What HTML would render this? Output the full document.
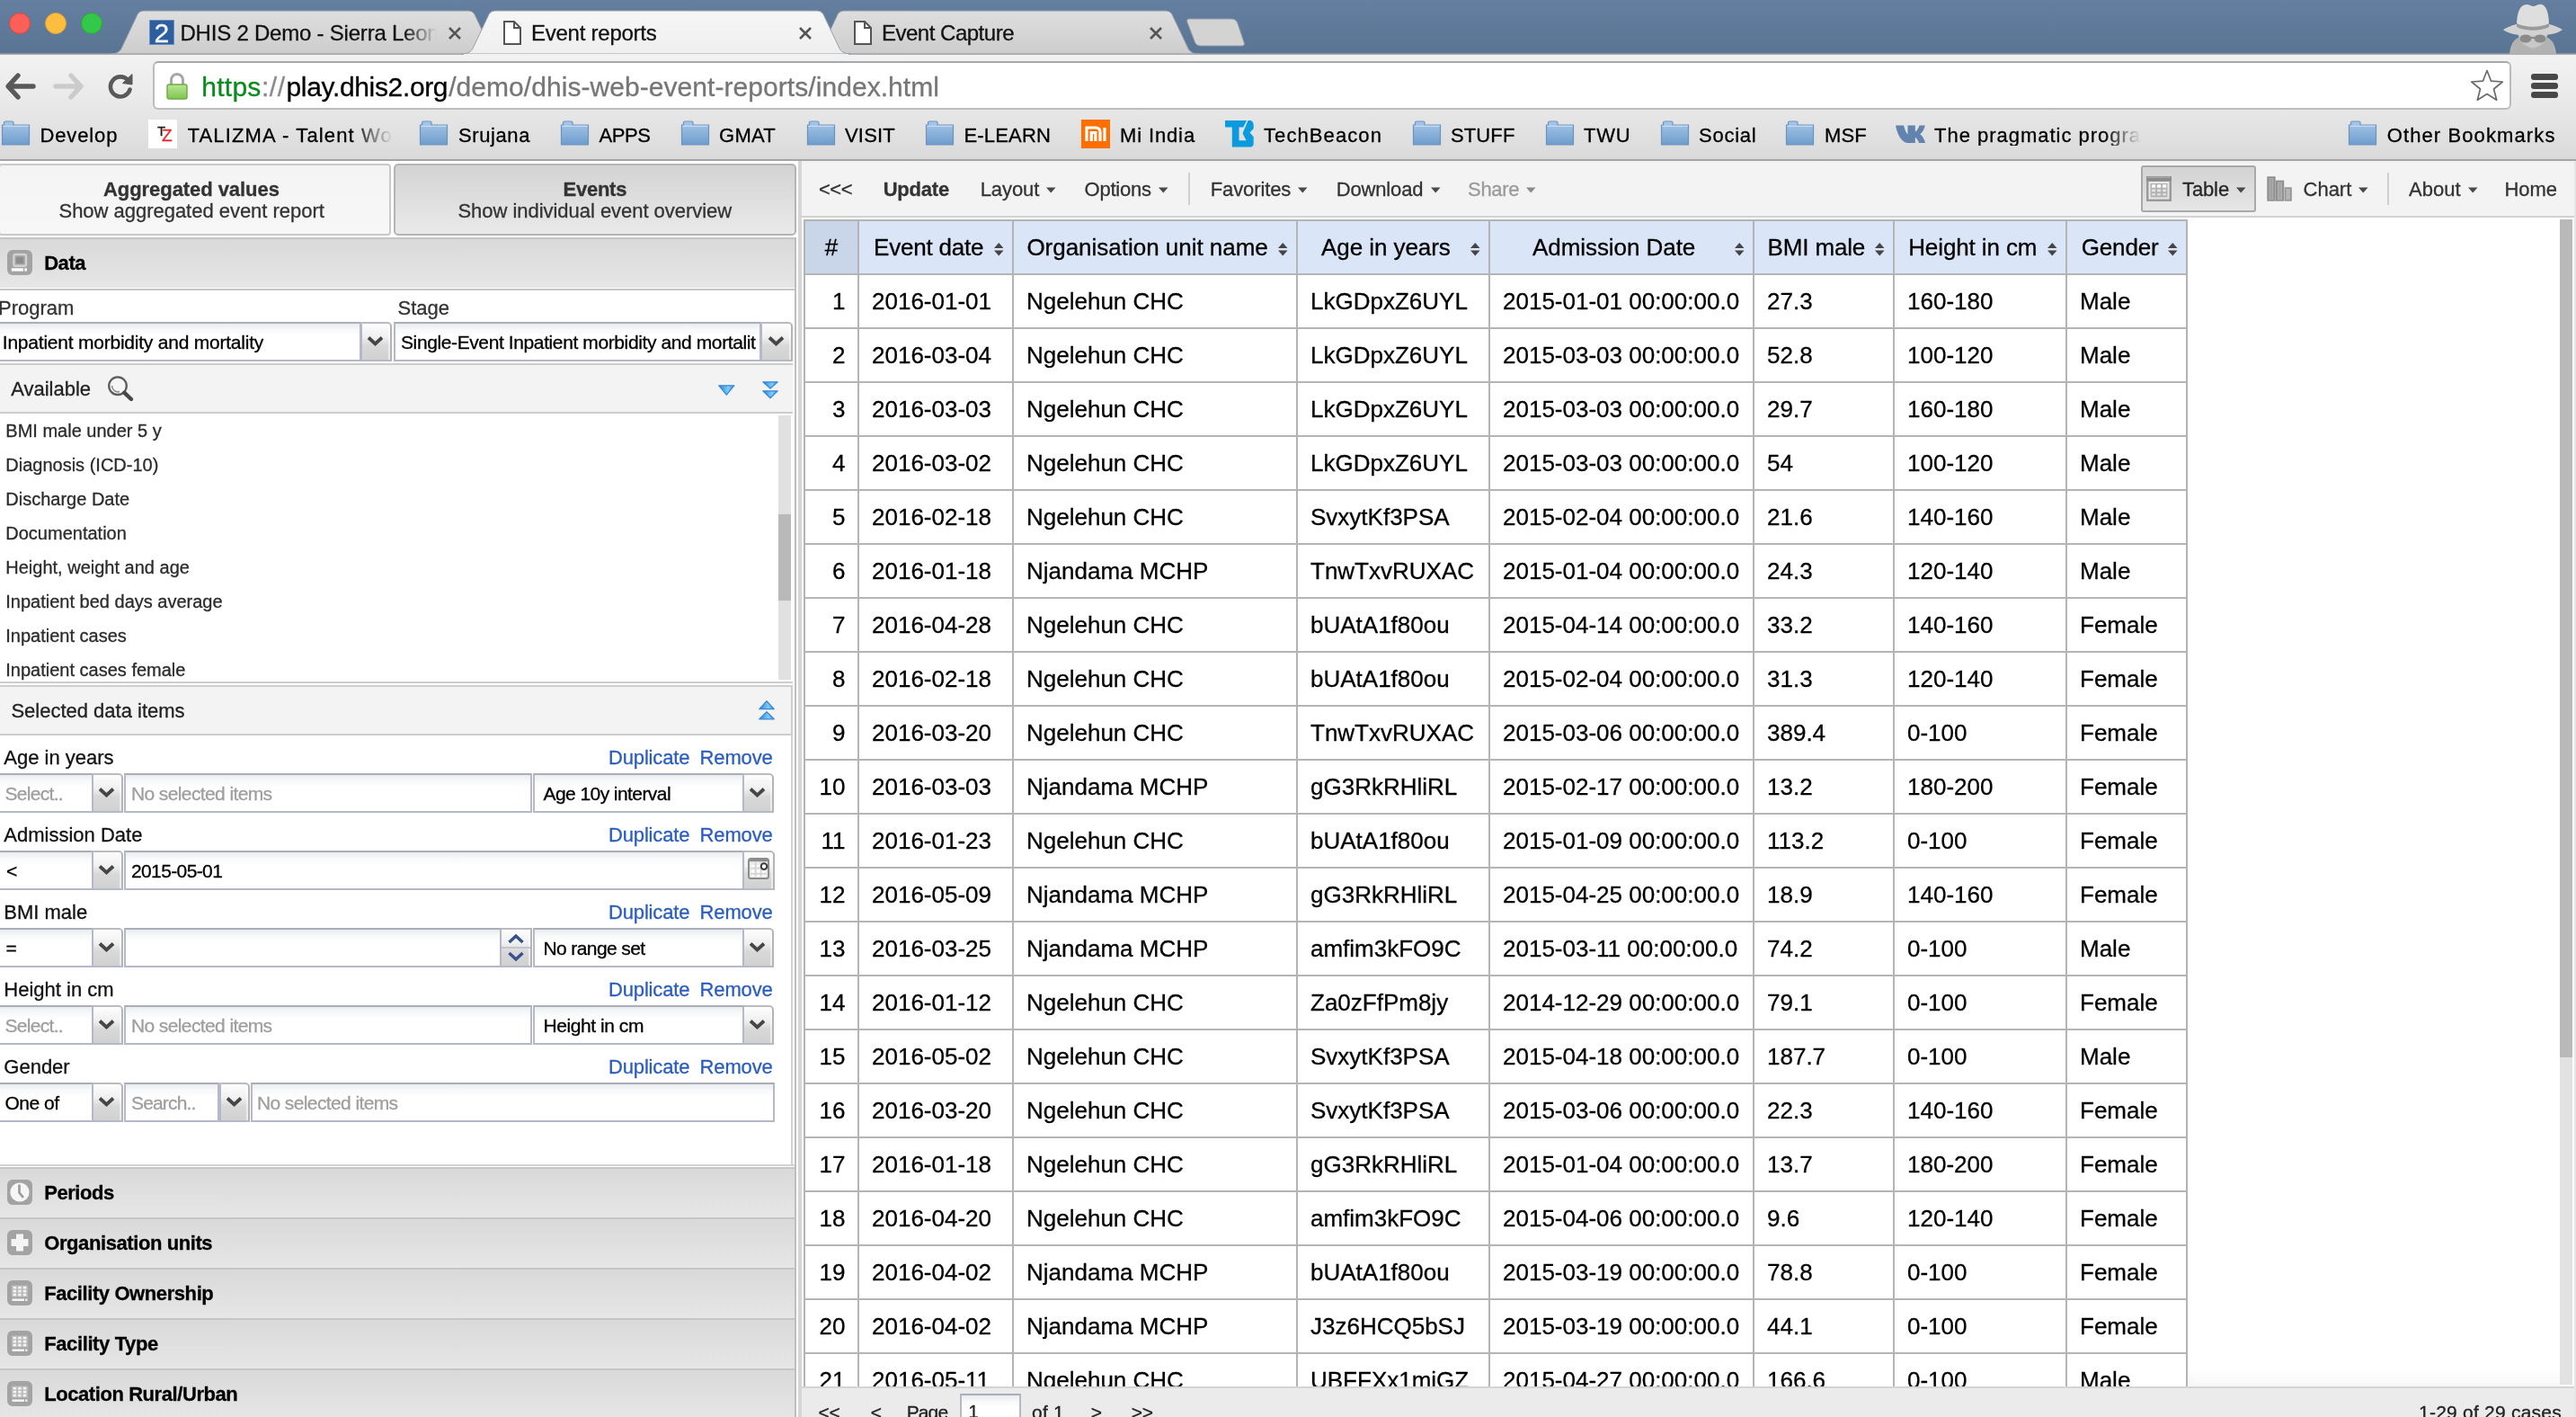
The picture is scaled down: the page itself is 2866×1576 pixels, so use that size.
<!DOCTYPE html>
<html><head><meta charset="utf-8"><title>Event reports</title>
<style>
html,body{margin:0;padding:0}
body{width:2866px;height:1576px;overflow:hidden;position:relative;background:#fff;font-family:"Liberation Sans",sans-serif}
.t{position:absolute;white-space:pre;line-height:1;-webkit-text-stroke:0.3px;font-family:"Liberation Sans",sans-serif}
.b{position:absolute;box-sizing:border-box}
svg{position:absolute;overflow:visible}
.fld{position:absolute;box-sizing:border-box;height:44px;border:2px solid #b5b8c8;border-top-color:#abadb9;background:linear-gradient(#e9ecee 0,#f8f9fa 7px,#fff 14px)}
.trg{position:absolute;box-sizing:border-box;height:44px;border:2px solid #b5b8c8;border-top-color:#bbbbbf;border-right-color:#b4b4b8;border-radius:0 5px 0 0;background:linear-gradient(#fdfdfd 0,#f0f0f0 38%,#d9d9d9 60%,#d1d1d1 100%);box-shadow:inset -2px 0 0 rgba(255,255,255,.55)}
.hdr{position:absolute;box-sizing:border-box;left:-2px;width:888px;height:56px;border:2px solid #c6c6c6;border-bottom:none;background:linear-gradient(#d9d9d9,#e6e6e6)}
.ico{position:absolute;left:8px;width:28px;height:28px;border-radius:6px;background:#a3a3a3}

</style></head><body>
<div id="root" style="position:absolute;left:0;top:0;width:2866px;height:1576px;will-change:transform"><div class="b" style="left:0;top:0;width:2866px;height:60px;background:linear-gradient(#647fa0,#5a7493)"></div><div class="b" style="left:10px;top:14px;width:24px;height:24px;border-radius:50%;background:#fc5f57;border:1px solid #e0443e"></div><div class="b" style="left:50px;top:14px;width:24px;height:24px;border-radius:50%;background:#fdbd3f;border:1px solid #dea033"></div><div class="b" style="left:90px;top:14px;width:24px;height:24px;border-radius:50%;background:#33c849;border:1px solid #27aa35"></div><svg width="2866" height="62" style="left:0;top:0"><defs><linearGradient id="gi" x1="0" y1="0" x2="0" y2="1"><stop offset="0" stop-color="#dedede"/><stop offset="1" stop-color="#cdcdcd"/></linearGradient><linearGradient id="ga" x1="0" y1="0" x2="0" y2="1"><stop offset="0" stop-color="#f6f6f6"/><stop offset="1" stop-color="#efefef"/></linearGradient></defs><path d="M122 60 C129 60 132 58 134.5 55 L152 18 C153.5 14 156 12 161 12 L520 12 C525 12 527.5 14 529 18 L546.5 55 C549 58 552 60 559 60 Z" fill="url(#gi)" stroke="#8f99a6" stroke-width="1"/><path d="M901 60 C908 60 911 58 913.5 55 L931 18 C932.5 14 935 12 940 12 L1296 12 C1301 12 1303.5 14 1305 18 L1322.5 55 C1325 58 1328 60 1335 60 Z" fill="url(#gi)" stroke="#8f99a6" stroke-width="1"/><path d="M1323 21 L1370 21 C1374 21 1376 23 1377 26 L1384 47 C1385 50 1384 51 1381 51 L1336 51 C1332 51 1330 49 1329 46 L1321 25 C1320 22 1321 21 1323 21 Z" fill="#d3d3d3" stroke="#9099a5" stroke-width="1"/><rect x="0" y="59.5" width="2866" height="1.5" fill="#adadad"/><path d="M513 60 C520 60 523 58 525.5 55 L543 18 C544.5 14 547 12 552 12 L908 12 C913 12 915.5 14 917 18 L934.5 55 C937 58 940 60 947 60 Z" fill="url(#ga)" stroke="#9aa2ad" stroke-width="1"/><rect x="516" y="60" width="428" height="2" fill="#efefef"/></svg><div class="b" style="left:166px;top:22px;width:28px;height:28px;background:#2d5f9f;border:1px solid #6d90bf"></div><span class="t " style="left:171.50px;top:22.11px;font-size:30px;color:#f4f7fb;font-weight:400;">2</span><span class="t " style="left:200.50px;top:24.98px;font-size:24px;color:#111;font-weight:400;letter-spacing:-0.218px;-webkit-mask-image:linear-gradient(90deg,#000 86%,transparent 99%);mask-image:linear-gradient(90deg,#000 86%,transparent 99%);">DHIS 2 Demo - Sierra Leon</span><svg width="14" height="14" style="left:499px;top:30px"><path d="M1 1 L13 13 M13 1 L1 13" stroke="#555" stroke-width="2.6" fill="none"/></svg><svg width="14" height="14" style="left:889px;top:30px"><path d="M1 1 L13 13 M13 1 L1 13" stroke="#555" stroke-width="2.6" fill="none"/></svg><svg width="14" height="14" style="left:1279px;top:30px"><path d="M1 1 L13 13 M13 1 L1 13" stroke="#555" stroke-width="2.6" fill="none"/></svg><svg width="20" height="27" style="left:560px;top:22.5px"><path d="M1 1 L12 1 L19 8 L19 26 L1 26 Z" fill="#fff" stroke="#555" stroke-width="2"/><path d="M12 1 L12 8 L19 8" fill="none" stroke="#555" stroke-width="2"/></svg><svg width="20" height="27" style="left:950px;top:22.5px"><path d="M1 1 L12 1 L19 8 L19 26 L1 26 Z" fill="#fff" stroke="#555" stroke-width="2"/><path d="M12 1 L12 8 L19 8" fill="none" stroke="#555" stroke-width="2"/></svg><span class="t " style="left:591.00px;top:24.98px;font-size:24px;color:#111;font-weight:400;letter-spacing:-0.249px;">Event reports</span><span class="t " style="left:981.00px;top:24.98px;font-size:24px;color:#111;font-weight:400;letter-spacing:-0.494px;">Event Capture</span><svg width="72" height="58" style="left:2782px;top:3px" viewBox="0 0 72 58"><path d="M10 58 C11 47 14 41 22 38 L50 38 C58 41 61 47 62 58 Z" fill="#bdbdbd"/><path d="M22 38 L36 52 L50 38 L58 44 L62 58 L10 58 L14 44 Z" fill="#b2b2b2"/><path d="M19 30 C19 42 27 50 36 50 C45 50 53 42 53 30 Z" fill="#c8c8c8"/><path d="M3 30 C12 24 26 22 36 22 C46 22 60 24 69 30 C60 37 46 36 36 36 C26 36 12 37 3 30 Z" fill="#d2d2d2"/><path d="M18 26 C18 10 22 2 29 2 C32 2 34 4 37 4 C40 4 42 1 46 2 C52 4 54 14 54 26 C44 30 28 30 18 26 Z" fill="#dedede"/><path d="M18 23 C28 28 44 28 54 23 L54 27 C44 32 28 32 18 27 Z" fill="#9b9b9b"/><ellipse cx="28" cy="40" rx="6.5" ry="4.5" fill="#8a8a8a"/><ellipse cx="44" cy="40" rx="6.5" ry="4.5" fill="#8a8a8a"/><path d="M33 39 L39 39" stroke="#8a8a8a" stroke-width="2"/></svg><div class="b" style="left:0;top:61px;width:2866px;height:118px;background:linear-gradient(#f2f2f2 0,#e8e8e8 50%,#dadada 100%);border-bottom:2px solid #a4a4a4"></div><svg width="32" height="28" style="left:6px;top:82px"><g ><path d="M14 2 L3 14 L14 26 M3.5 14 L31 14" fill="none" stroke="#595959" stroke-width="5.4" stroke-linejoin="round" stroke-linecap="round"/></g></svg><svg width="32" height="28" style="left:61px;top:82px"><g transform="translate(32,0) scale(-1,1)"><path d="M14 2 L3 14 L14 26 M3.5 14 L31 14" fill="none" stroke="#cbcbcb" stroke-width="5.4" stroke-linejoin="round" stroke-linecap="round"/></g></svg><svg width="30" height="30" style="left:119px;top:81px"><path d="M23.5 8.5 A11 11 0 1 0 25.5 18.5" fill="none" stroke="#595959" stroke-width="4.6" stroke-linecap="round"/><path d="M17.5 11.5 L28 1.5 L28 13 Z" fill="#595959" stroke="#595959" stroke-width="1" stroke-linejoin="round"/></svg><div class="b" style="left:170px;top:68px;width:2624px;height:54px;background:#fff;border:2px solid #bcbcbc;border-top-color:#a9a9a9;border-radius:6px"></div><svg width="24" height="30" style="left:185px;top:81px"><defs><linearGradient id="lk" x1="0" y1="0" x2="0" y2="1"><stop offset="0" stop-color="#b9e893"/><stop offset="1" stop-color="#7fc552"/></linearGradient></defs><path d="M5.5 14 L5.5 8 A6.5 6.5 0 0 1 18.5 8 L18.5 14" fill="none" stroke="#a7a7a7" stroke-width="3"/><rect x="1" y="13" width="22" height="16" rx="2" fill="url(#lk)" stroke="#6daa41" stroke-width="1.4"/></svg><span class="t " style="left:224.30px;top:81.91px;font-size:30px;color:#0b8a1e;font-weight:400;letter-spacing:0.251px;">https</span><span class="t " style="left:291.00px;top:81.91px;font-size:30px;color:#8a8a8a;font-weight:400;letter-spacing:0.495px;">://</span><span class="t " style="left:318.50px;top:81.91px;font-size:30px;color:#000;font-weight:400;letter-spacing:-0.347px;">play.dhis2.org</span><span class="t " style="left:499.20px;top:81.91px;font-size:30px;color:#767676;font-weight:400;letter-spacing:0.057px;">/demo/dhis-web-event-reports/index.html</span><svg width="40" height="38" style="left:2747px;top:76px"><path d="M20 2.5 L24.6 14.2 L37.3 15 L27.5 23 L30.7 35.3 L20 28.5 L9.3 35.3 L12.5 23 L2.7 15 L15.4 14.2 Z" fill="#fff" stroke="#6b6b6b" stroke-width="1.7" stroke-linejoin="round"/></svg><div class="b" style="left:2816px;top:82px;width:30px;height:6.5px;border-radius:3px;background:#484848"></div><div class="b" style="left:2816px;top:92px;width:30px;height:6.5px;border-radius:3px;background:#484848"></div><div class="b" style="left:2816px;top:102px;width:30px;height:6.5px;border-radius:3px;background:#484848"></div><svg width="0" height="0"><defs><linearGradient id="fg" x1="0" y1="0" x2="0" y2="1"><stop offset="0" stop-color="#a9c8e8"/><stop offset="1" stop-color="#6d9ccc"/></linearGradient><symbol id="fold" viewBox="0 0 33 28"><path d="M1.5 27 L1.5 5 L3.5 5 L3.5 2.5 C3.5 1.5 4.2 1 5 1 L12.5 1 C13.5 1 14 1.6 14 2.5 L14 5 L31.5 5 L31.5 27 Z" fill="url(#fg)" stroke="#6b93bf" stroke-width="1.2"/><path d="M2.3 6.3 L30.7 6.3" stroke="#c9def3" stroke-width="1.2"/></symbol></defs></svg><svg width="33" height="28" style="left:1px;top:134px"><use href="#fold"/></svg><span class="t " style="left:44.50px;top:139.68px;font-size:22px;color:#000;font-weight:400;letter-spacing:0.869px;">Develop</span><svg width="33" height="28" style="left:466px;top:134px"><use href="#fold"/></svg><span class="t " style="left:510.00px;top:139.68px;font-size:22px;color:#000;font-weight:400;letter-spacing:0.594px;">Srujana</span><svg width="33" height="28" style="left:622.5px;top:134px"><use href="#fold"/></svg><span class="t " style="left:666.50px;top:139.68px;font-size:22px;color:#000;font-weight:400;letter-spacing:-0.426px;">APPS</span><svg width="33" height="28" style="left:757px;top:134px"><use href="#fold"/></svg><span class="t " style="left:800.00px;top:139.68px;font-size:22px;color:#000;font-weight:400;letter-spacing:0.270px;">GMAT</span><svg width="33" height="28" style="left:896.5px;top:134px"><use href="#fold"/></svg><span class="t " style="left:940.00px;top:139.68px;font-size:22px;color:#000;font-weight:400;letter-spacing:0.197px;">VISIT</span><svg width="33" height="28" style="left:1029px;top:134px"><use href="#fold"/></svg><span class="t " style="left:1072.50px;top:139.68px;font-size:22px;color:#000;font-weight:400;letter-spacing:0.163px;">E-LEARN</span><svg width="33" height="28" style="left:1571px;top:134px"><use href="#fold"/></svg><span class="t " style="left:1614.00px;top:139.68px;font-size:22px;color:#000;font-weight:400;letter-spacing:0.122px;">STUFF</span><svg width="33" height="28" style="left:1718.5px;top:134px"><use href="#fold"/></svg><span class="t " style="left:1762.00px;top:139.68px;font-size:22px;color:#000;font-weight:400;letter-spacing:0.802px;">TWU</span><svg width="33" height="28" style="left:1846.5px;top:134px"><use href="#fold"/></svg><span class="t " style="left:1890.00px;top:139.68px;font-size:22px;color:#000;font-weight:400;letter-spacing:0.763px;">Social</span><svg width="33" height="28" style="left:1986px;top:134px"><use href="#fold"/></svg><span class="t " style="left:2030.00px;top:139.68px;font-size:22px;color:#000;font-weight:400;letter-spacing:0.182px;">MSF</span><svg width="33" height="28" style="left:2612px;top:134px"><use href="#fold"/></svg><span class="t " style="left:2655.70px;top:139.68px;font-size:22px;color:#000;font-weight:400;letter-spacing:1.109px;">Other Bookmarks</span><div class="b" style="left:165px;top:133px;width:32px;height:32px;background:#fff"></div><span class="t " style="left:175.00px;top:138.30px;font-size:15px;color:#222;font-weight:400;">T</span><span class="t " style="left:180.00px;top:140.92px;font-size:19px;color:#e8262a;font-weight:400;">Z</span><span class="t " style="left:208.60px;top:139.68px;font-size:22px;color:#000;font-weight:400;letter-spacing:1.145px;-webkit-mask-image:linear-gradient(90deg,#000 80%,transparent 100%);">TALIZMA - Talent Wo</span><div class="b" style="left:1203px;top:133px;width:32px;height:32px;background:#ff6f00"></div><svg width="32" height="32" style="left:1203px;top:133px"><path d="M6 24 L6 9 L16 9 C19.5 9 21 10.5 21 14 L21 24 M11.2 24 L11.2 14.5 L15.8 14.5 L15.8 24 M26 9 L26 24" fill="none" stroke="#fff" stroke-width="3.2"/></svg><span class="t " style="left:1246.00px;top:139.68px;font-size:22px;color:#000;font-weight:400;letter-spacing:0.869px;">Mi India</span><svg width="34" height="32" style="left:1362px;top:133px"><path fill-rule="evenodd" fill="#0a9ade" d="M1 1.1 L29.5 1.1 C31.5 1.8 32.7 3.8 32.7 6 L32.7 10 L28.5 14.6 L32.7 19.2 L32.7 27 C32.7 29.2 31 30.6 29 30.6 L8.8 30.6 L8.8 8.4 L1 8.4 Z M16.5 8.4 L21.3 8.4 L25 1.1 L26.6 1.1 L20.9 14.2 C20.6 15 20.7 15.6 21 16.2 L24.6 23.3 L16.5 23.3 Z"/></svg><span class="t " style="left:1406.00px;top:139.68px;font-size:22px;color:#000;font-weight:400;letter-spacing:1.091px;">TechBeacon</span><svg width="34" height="21" style="left:2108.6px;top:138.6px"><path d="M0 0.5 L9 0.5 C10.5 6 12 9.5 13.5 10.5 L13.5 0.5 L21.8 0.5 L21.8 7.5 C24 6.5 25.5 3.5 26.5 0.5 L32.8 0.5 C32 4.5 29.8 8.3 27.2 10.3 C30 12.3 32.3 16.3 33 20 L26 20 C25.2 17.3 23.6 14.8 21.8 13.8 L21.8 20 L13 20 C6 18.5 2 10.5 0 0.5 Z" fill="#6283ae"/></svg><span class="t " style="left:2152.00px;top:139.68px;font-size:22px;color:#000;font-weight:400;letter-spacing:0.984px;-webkit-mask-image:linear-gradient(90deg,#000 82%,transparent 100%);">The pragmatic progra</span><div class="b" style="left:-2px;top:182px;width:437px;height:80px;background:linear-gradient(#f4f4f4,#f7f7f7);border:2px solid #c9c9c9;border-radius:4px"></div><div class="b" style="left:438px;top:182px;width:448px;height:80px;background:linear-gradient(#d3d3d3,#eaeaea);border:2px solid #b4b4b4;border-radius:5px"></div><span class="t " style="left:115.00px;top:199.68px;font-size:22px;color:#333;font-weight:700;letter-spacing:-0.061px;-webkit-text-stroke:0.3px;">Aggregated values</span><span class="t " style="left:65.50px;top:224.08px;font-size:22px;color:#333;font-weight:400;letter-spacing:-0.024px;">Show aggregated event report</span><span class="t " style="left:626.50px;top:199.68px;font-size:22px;color:#333;font-weight:700;letter-spacing:-0.243px;-webkit-text-stroke:0.3px;">Events</span><span class="t " style="left:509.40px;top:224.08px;font-size:22px;color:#333;font-weight:400;letter-spacing:-0.031px;">Show individual event overview</span><div class="hdr" style="top:264px"></div><div class="ico" style="top:278px"></div><svg width="28" height="28" style="left:8px;top:278px"><rect x="7.3" y="5" width="13.7" height="12.8" rx="2" fill="none" stroke="#d2d2d2" stroke-width="2.4"/><rect x="10.2" y="7.9" width="7.9" height="7" rx="1" fill="#8c8c8c"/><rect x="4.8" y="20.3" width="13.2" height="3.3" fill="#fff"/><rect x="19.3" y="20.3" width="2.7" height="3.3" fill="#fff"/></svg><span class="t " style="left:49.20px;top:281.78px;font-size:22px;color:#000;font-weight:700;letter-spacing:-0.453px;-webkit-text-stroke:0.3px;">Data</span><div class="b" style="left:-2px;top:321px;width:888px;height:976px;background:#fff;border:2px solid #c6c6c6;border-bottom-color:#d2d2d2"></div><span class="t " style="left:-2.00px;top:332.18px;font-size:22px;color:#333;font-weight:400;">Program</span><span class="t " style="left:442.50px;top:332.18px;font-size:22px;color:#333;font-weight:400;">Stage</span><div class="fld" style="left:-2px;top:358px;width:404px"></div><span class="t " style="left:2.80px;top:370.02px;font-size:21px;color:#000;font-weight:400;letter-spacing:-0.225px;">Inpatient morbidity and mortality</span><div class="trg" style="left:401px;top:358px;width:35px"></div><svg width="21" height="14" style="left:407.0px;top:372.5px"><path d="M3 2.5 L10.5 9.5 L18 2.5" fill="none" stroke="#464646" stroke-width="3.8"/></svg><div class="fld" style="left:438px;top:358px;width:409px"></div><span class="t " style="left:446.00px;top:370.02px;font-size:21px;color:#000;font-weight:400;letter-spacing:-0.390px;">Single-Event Inpatient morbidity and mortalit</span><div class="trg" style="left:846px;top:358px;width:36px"></div><svg width="21" height="14" style="left:852.5px;top:372.5px"><path d="M3 2.5 L10.5 9.5 L18 2.5" fill="none" stroke="#464646" stroke-width="3.8"/></svg><div class="b" style="left:-2px;top:404px;width:884px;height:56px;background:#f3f3f3;border:2px solid #cdcdcd;border-right:none"></div><span class="t " style="left:12.20px;top:421.68px;font-size:22px;color:#222;font-weight:400;">Available</span><svg width="30" height="30" style="left:119px;top:417px"><circle cx="12" cy="12.2" r="9.8" fill="#f6f6f6" stroke="#5c5c5c" stroke-width="2.3"/><path d="M5.5 12 A6.8 6.8 0 0 0 14 18.6" fill="none" stroke="#8e8e8e" stroke-width="1.6"/><path d="M19.5 19.8 L27 27" stroke="#474747" stroke-width="4.4" stroke-linecap="round"/></svg><svg width="0" height="0"><defs><linearGradient id="bl" x1="0" y1="0" x2="1" y2="0"><stop offset="0" stop-color="#2b80d3"/><stop offset="0.62" stop-color="#7bcff8"/><stop offset="1" stop-color="#3a8ddb"/></linearGradient></defs></svg><svg width="18.6" height="12" style="left:799.4px;top:428.2px"><path d="M0.8 0.8 L17.8 0.8 L9.3 11.2 Z" fill="url(#bl)" stroke="#3a88d6" stroke-width="1.3" stroke-linejoin="round"/></svg><svg width="18" height="8.8" style="left:848px;top:423.7px"><path d="M0.8 0.8 L17.2 0.8 L9.0 8.0 Z" fill="url(#bl)" stroke="#3a88d6" stroke-width="1.3" stroke-linejoin="round"/></svg><svg width="18" height="9.6" style="left:848px;top:434.4px"><path d="M0.8 0.8 L17.2 0.8 L9.0 8.799999999999999 Z" fill="url(#bl)" stroke="#3a88d6" stroke-width="1.3" stroke-linejoin="round"/></svg><span class="t " style="left:6.30px;top:468.57px;font-size:20px;color:#2b2b2b;font-weight:400;">BMI male under 5 y</span><span class="t " style="left:6.30px;top:506.57px;font-size:20px;color:#2b2b2b;font-weight:400;">Diagnosis (ICD-10)</span><span class="t " style="left:6.30px;top:544.57px;font-size:20px;color:#2b2b2b;font-weight:400;">Discharge Date</span><span class="t " style="left:6.30px;top:582.57px;font-size:20px;color:#2b2b2b;font-weight:400;">Documentation</span><span class="t " style="left:6.30px;top:620.57px;font-size:20px;color:#2b2b2b;font-weight:400;">Height, weight and age</span><span class="t " style="left:6.30px;top:658.57px;font-size:20px;color:#2b2b2b;font-weight:400;">Inpatient bed days average</span><span class="t " style="left:6.30px;top:696.57px;font-size:20px;color:#2b2b2b;font-weight:400;">Inpatient cases</span><span class="t " style="left:6.30px;top:734.57px;font-size:20px;color:#2b2b2b;font-weight:400;">Inpatient cases female</span><div class="b" style="left:866px;top:462px;width:14px;height:294px;background:#e1e1e1"></div><div class="b" style="left:866px;top:572px;width:14px;height:96px;background:#b9b9b9"></div><div class="b" style="left:-2px;top:758px;width:884px;height:2px;background:#cdcdcd"></div><div class="b" style="left:-2px;top:762px;width:884px;height:56px;background:#f3f3f3;border:2px solid #cdcdcd"></div><div class="b" style="left:880px;top:816px;width:2px;height:480px;background:#d2d2d2"></div><span class="t " style="left:12.40px;top:779.78px;font-size:22px;color:#222;font-weight:400;">Selected data items</span><svg width="18" height="10.4" style="left:844px;top:779.2px"><path d="M0.8 9.6 L17.2 9.6 L9.0 0.8 Z" fill="url(#bl)" stroke="#3a88d6" stroke-width="1.3" stroke-linejoin="round"/></svg><svg width="18" height="9.6" style="left:844px;top:790.6px"><path d="M0.8 8.799999999999999 L17.2 8.799999999999999 L9.0 0.8 Z" fill="url(#bl)" stroke="#3a88d6" stroke-width="1.3" stroke-linejoin="round"/></svg><span class="t " style="left:4.30px;top:832.18px;font-size:22px;color:#111;font-weight:400;">Age in years</span><span class="t " style="left:677.00px;top:832.18px;font-size:22px;color:#2a5dc0;font-weight:400;letter-spacing:-0.158px;">Duplicate</span><span class="t " style="left:778.60px;top:832.18px;font-size:22px;color:#2a5dc0;font-weight:400;letter-spacing:-0.154px;">Remove</span><div class="fld" style="left:-2px;top:860px;width:106px"></div><span class="t " style="left:5.50px;top:872.02px;font-size:21px;color:#9e9e9e;font-weight:400;letter-spacing:-0.693px;">Select..</span><div class="trg" style="left:102px;top:860px;width:35px"></div><svg width="21" height="14" style="left:108.0px;top:874.5px"><path d="M3 2.5 L10.5 9.5 L18 2.5" fill="none" stroke="#464646" stroke-width="3.8"/></svg><div class="fld" style="left:138px;top:860px;width:454px"></div><span class="t " style="left:146.00px;top:872.02px;font-size:21px;color:#9e9e9e;font-weight:400;letter-spacing:-0.612px;">No selected items</span><div class="fld" style="left:593px;top:860px;width:235px"></div><span class="t " style="left:604.50px;top:872.02px;font-size:21px;color:#000;font-weight:400;letter-spacing:-0.568px;">Age 10y interval</span><div class="trg" style="left:826px;top:860px;width:35px"></div><svg width="21" height="14" style="left:832.0px;top:874.5px"><path d="M3 2.5 L10.5 9.5 L18 2.5" fill="none" stroke="#464646" stroke-width="3.8"/></svg><span class="t " style="left:4.30px;top:918.18px;font-size:22px;color:#111;font-weight:400;">Admission Date</span><span class="t " style="left:677.00px;top:918.18px;font-size:22px;color:#2a5dc0;font-weight:400;letter-spacing:-0.158px;">Duplicate</span><span class="t " style="left:778.60px;top:918.18px;font-size:22px;color:#2a5dc0;font-weight:400;letter-spacing:-0.154px;">Remove</span><div class="fld" style="left:-2px;top:946px;width:106px"></div><span class="t " style="left:7.00px;top:958.02px;font-size:21px;color:#000;font-weight:400;">&lt;</span><div class="trg" style="left:102px;top:946px;width:35px"></div><svg width="21" height="14" style="left:108.0px;top:960.5px"><path d="M3 2.5 L10.5 9.5 L18 2.5" fill="none" stroke="#464646" stroke-width="3.8"/></svg><div class="fld" style="left:138px;top:946px;width:690px"></div><span class="t " style="left:146.00px;top:958.02px;font-size:21px;color:#000;font-weight:400;letter-spacing:-0.622px;">2015-05-01</span><div class="trg" style="left:826px;top:946px;width:36px"></div><svg width="24" height="24" style="left:832px;top:954.3px"><rect x="1" y="1" width="22" height="22" rx="2.5" fill="#ececec" stroke="#8c8c8c" stroke-width="2"/><rect x="1" y="1" width="22" height="3.2" fill="#8c8c8c"/><path d="M3 11.5 L21 11.5 M3 17.8 L21 17.8 M8.6 5 L8.6 21 M14.6 5 L14.6 21" stroke="#d4d4d4" stroke-width="1.6"/><path d="M4 8 h3.4 v2.6 h-3.4z M10 8 h3.4 v2.6 h-3.4z M4 13.6 h3.4 v3 h-3.4z M10 13.6 h3.4 v3 h-3.4z M16 13.6 h3.4 v3 h-3.4z M4 19 h3.4 v1.6 h-3.4z M10 19 h3.4 v1.6 h-3.4z M16 19 h3.4 v1.6 h-3.4z" fill="#fff"/><circle cx="18" cy="9.6" r="3.3" fill="#fff" stroke="#3a3a3a" stroke-width="2"/></svg><span class="t " style="left:4.30px;top:1004.18px;font-size:22px;color:#111;font-weight:400;">BMI male</span><span class="t " style="left:677.00px;top:1004.18px;font-size:22px;color:#2a5dc0;font-weight:400;letter-spacing:-0.158px;">Duplicate</span><span class="t " style="left:778.60px;top:1004.18px;font-size:22px;color:#2a5dc0;font-weight:400;letter-spacing:-0.154px;">Remove</span><div class="fld" style="left:-2px;top:1032px;width:106px"></div><span class="t " style="left:6.50px;top:1044.02px;font-size:21px;color:#000;font-weight:400;">=</span><div class="trg" style="left:102px;top:1032px;width:35px"></div><svg width="21" height="14" style="left:108.0px;top:1046.5px"><path d="M3 2.5 L10.5 9.5 L18 2.5" fill="none" stroke="#464646" stroke-width="3.8"/></svg><div class="fld" style="left:138px;top:1032px;width:420px"></div><div class="trg" style="left:556px;top:1032px;width:36px;border-radius:0"></div><div class="b" style="left:558px;top:1053px;width:32px;height:2px;background:#c3c5cf"></div><svg width="20" height="36" style="left:564px;top:1036px"><path d="M2.5 12 L10 5 L17.5 12" fill="none" stroke="#34518c" stroke-width="3.4"/><path d="M2.5 24 L10 31 L17.5 24" fill="none" stroke="#34518c" stroke-width="3.4"/></svg><div class="fld" style="left:593px;top:1032px;width:235px"></div><span class="t " style="left:604.50px;top:1044.02px;font-size:21px;color:#000;font-weight:400;letter-spacing:-0.604px;">No range set</span><div class="trg" style="left:826px;top:1032px;width:35px"></div><svg width="21" height="14" style="left:832.0px;top:1046.5px"><path d="M3 2.5 L10.5 9.5 L18 2.5" fill="none" stroke="#464646" stroke-width="3.8"/></svg><span class="t " style="left:4.30px;top:1090.18px;font-size:22px;color:#111;font-weight:400;">Height in cm</span><span class="t " style="left:677.00px;top:1090.18px;font-size:22px;color:#2a5dc0;font-weight:400;letter-spacing:-0.158px;">Duplicate</span><span class="t " style="left:778.60px;top:1090.18px;font-size:22px;color:#2a5dc0;font-weight:400;letter-spacing:-0.154px;">Remove</span><div class="fld" style="left:-2px;top:1118px;width:106px"></div><span class="t " style="left:5.50px;top:1130.02px;font-size:21px;color:#9e9e9e;font-weight:400;letter-spacing:-0.693px;">Select..</span><div class="trg" style="left:102px;top:1118px;width:35px"></div><svg width="21" height="14" style="left:108.0px;top:1132.5px"><path d="M3 2.5 L10.5 9.5 L18 2.5" fill="none" stroke="#464646" stroke-width="3.8"/></svg><div class="fld" style="left:138px;top:1118px;width:454px"></div><span class="t " style="left:146.00px;top:1130.02px;font-size:21px;color:#9e9e9e;font-weight:400;letter-spacing:-0.612px;">No selected items</span><div class="fld" style="left:593px;top:1118px;width:235px"></div><span class="t " style="left:604.50px;top:1130.02px;font-size:21px;color:#000;font-weight:400;letter-spacing:-0.435px;">Height in cm</span><div class="trg" style="left:826px;top:1118px;width:35px"></div><svg width="21" height="14" style="left:832.0px;top:1132.5px"><path d="M3 2.5 L10.5 9.5 L18 2.5" fill="none" stroke="#464646" stroke-width="3.8"/></svg><span class="t " style="left:4.30px;top:1176.18px;font-size:22px;color:#111;font-weight:400;">Gender</span><span class="t " style="left:677.00px;top:1176.18px;font-size:22px;color:#2a5dc0;font-weight:400;letter-spacing:-0.158px;">Duplicate</span><span class="t " style="left:778.60px;top:1176.18px;font-size:22px;color:#2a5dc0;font-weight:400;letter-spacing:-0.154px;">Remove</span><div class="fld" style="left:-2px;top:1204px;width:106px"></div><span class="t " style="left:5.50px;top:1216.02px;font-size:21px;color:#000;font-weight:400;letter-spacing:-0.508px;">One of</span><div class="trg" style="left:102px;top:1204px;width:35px"></div><svg width="21" height="14" style="left:108.0px;top:1218.5px"><path d="M3 2.5 L10.5 9.5 L18 2.5" fill="none" stroke="#464646" stroke-width="3.8"/></svg><div class="fld" style="left:138px;top:1204px;width:106px"></div><span class="t " style="left:146.00px;top:1216.02px;font-size:21px;color:#9e9e9e;font-weight:400;letter-spacing:-0.840px;">Search..</span><div class="trg" style="left:244px;top:1204px;width:34px"></div><svg width="21" height="14" style="left:249.5px;top:1218.5px"><path d="M3 2.5 L10.5 9.5 L18 2.5" fill="none" stroke="#464646" stroke-width="3.8"/></svg><div class="fld" style="left:279px;top:1204px;width:583px"></div><span class="t " style="left:286.00px;top:1216.02px;font-size:21px;color:#9e9e9e;font-weight:400;letter-spacing:-0.612px;">No selected items</span><div class="hdr" style="top:1298px"></div><div class="ico" style="top:1312px"></div><svg width="28" height="28" style="left:8px;top:1312px"><circle cx="14" cy="14" r="10.6" fill="#f6f6f6"/><path d="M13.5 5.5 L13.5 14.5 L18 20" fill="none" stroke="#9a9a9a" stroke-width="2.6"/></svg><span class="t " style="left:49.20px;top:1315.78px;font-size:22px;color:#000;font-weight:700;letter-spacing:-0.438px;-webkit-text-stroke:0.3px;">Periods</span><div class="hdr" style="top:1354px"></div><div class="ico" style="top:1368px"></div><svg width="28" height="28" style="left:8px;top:1368px"><path d="M14 4.5 L14 23.5 M4.5 14 L23.5 14" stroke="#f4f4f4" stroke-width="8"/></svg><span class="t " style="left:49.20px;top:1371.78px;font-size:22px;color:#000;font-weight:700;letter-spacing:-0.410px;-webkit-text-stroke:0.3px;">Organisation units</span><div class="hdr" style="top:1410px"></div><div class="ico" style="top:1424px"></div><svg width="28" height="28" style="left:8px;top:1424px"><rect x="5" y="5.5" width="18" height="13" fill="#bcbcbc"/><rect x="6.6" y="6.8" width="3.4" height="2.6" fill="#f4f4f4"/><rect x="6.6" y="10.8" width="3.4" height="2.6" fill="#f4f4f4"/><rect x="6.6" y="14.8" width="3.4" height="2.6" fill="#f4f4f4"/><rect x="12.2" y="6.8" width="3.4" height="2.6" fill="#f4f4f4"/><rect x="12.2" y="10.8" width="3.4" height="2.6" fill="#f4f4f4"/><rect x="12.2" y="14.8" width="3.4" height="2.6" fill="#f4f4f4"/><rect x="17.8" y="6.8" width="3.4" height="2.6" fill="#f4f4f4"/><rect x="17.8" y="10.8" width="3.4" height="2.6" fill="#f4f4f4"/><rect x="17.8" y="14.8" width="3.4" height="2.6" fill="#f4f4f4"/><rect x="5.5" y="20.4" width="13.5" height="2.6" fill="#f2f2f2"/><rect x="20" y="20.4" width="2.6" height="2.6" fill="#e6e6e6"/></svg><span class="t " style="left:49.20px;top:1427.78px;font-size:22px;color:#000;font-weight:700;letter-spacing:-0.413px;-webkit-text-stroke:0.3px;">Facility Ownership</span><div class="hdr" style="top:1466px"></div><div class="ico" style="top:1480px"></div><svg width="28" height="28" style="left:8px;top:1480px"><rect x="5" y="5.5" width="18" height="13" fill="#bcbcbc"/><rect x="6.6" y="6.8" width="3.4" height="2.6" fill="#f4f4f4"/><rect x="6.6" y="10.8" width="3.4" height="2.6" fill="#f4f4f4"/><rect x="6.6" y="14.8" width="3.4" height="2.6" fill="#f4f4f4"/><rect x="12.2" y="6.8" width="3.4" height="2.6" fill="#f4f4f4"/><rect x="12.2" y="10.8" width="3.4" height="2.6" fill="#f4f4f4"/><rect x="12.2" y="14.8" width="3.4" height="2.6" fill="#f4f4f4"/><rect x="17.8" y="6.8" width="3.4" height="2.6" fill="#f4f4f4"/><rect x="17.8" y="10.8" width="3.4" height="2.6" fill="#f4f4f4"/><rect x="17.8" y="14.8" width="3.4" height="2.6" fill="#f4f4f4"/><rect x="5.5" y="20.4" width="13.5" height="2.6" fill="#f2f2f2"/><rect x="20" y="20.4" width="2.6" height="2.6" fill="#e6e6e6"/></svg><span class="t " style="left:49.20px;top:1483.78px;font-size:22px;color:#000;font-weight:700;letter-spacing:-0.385px;-webkit-text-stroke:0.3px;">Facility Type</span><div class="hdr" style="top:1522px"></div><div class="ico" style="top:1536px"></div><svg width="28" height="28" style="left:8px;top:1536px"><rect x="5" y="5.5" width="18" height="13" fill="#bcbcbc"/><rect x="6.6" y="6.8" width="3.4" height="2.6" fill="#f4f4f4"/><rect x="6.6" y="10.8" width="3.4" height="2.6" fill="#f4f4f4"/><rect x="6.6" y="14.8" width="3.4" height="2.6" fill="#f4f4f4"/><rect x="12.2" y="6.8" width="3.4" height="2.6" fill="#f4f4f4"/><rect x="12.2" y="10.8" width="3.4" height="2.6" fill="#f4f4f4"/><rect x="12.2" y="14.8" width="3.4" height="2.6" fill="#f4f4f4"/><rect x="17.8" y="6.8" width="3.4" height="2.6" fill="#f4f4f4"/><rect x="17.8" y="10.8" width="3.4" height="2.6" fill="#f4f4f4"/><rect x="17.8" y="14.8" width="3.4" height="2.6" fill="#f4f4f4"/><rect x="5.5" y="20.4" width="13.5" height="2.6" fill="#f2f2f2"/><rect x="20" y="20.4" width="2.6" height="2.6" fill="#e6e6e6"/></svg><span class="t " style="left:49.20px;top:1539.78px;font-size:22px;color:#000;font-weight:700;letter-spacing:-0.425px;-webkit-text-stroke:0.3px;">Location Rural/Urban</span><div class="b" style="left:884px;top:265px;width:2px;height:1311px;background:#bdbdbd"></div><div class="b" style="left:886px;top:179px;width:2px;height:1397px;background:#fff"></div><div class="b" style="left:888px;top:179px;width:4px;height:1397px;background:#d6d6d6"></div><div class="b" style="left:892px;top:179px;width:1972px;height:63px;background:#f3f3f3;border-bottom:2px solid #d2d2d2"></div><div class="b" style="left:2864px;top:179px;width:2px;height:1397px;background:#e6e6e6"></div><span class="t " style="left:911.00px;top:200.38px;font-size:22px;color:#333;font-weight:400;letter-spacing:-0.516px;">&lt;&lt;&lt;</span><span class="t " style="left:982.70px;top:200.38px;font-size:22px;color:#333;font-weight:700;letter-spacing:-0.210px;-webkit-text-stroke:0.3px;">Update</span><span class="t " style="left:1090.70px;top:200.38px;font-size:22px;color:#333;font-weight:400;letter-spacing:-0.077px;">Layout</span><svg width="11" height="7" style="left:1164px;top:207.5px"><path d="M0 0.5 L10.5 0.5 L5.25 6.5 Z" fill="#484848"/></svg><span class="t " style="left:1206.50px;top:200.38px;font-size:22px;color:#333;font-weight:400;letter-spacing:-0.218px;">Options</span><svg width="11" height="7" style="left:1288.5px;top:207.5px"><path d="M0 0.5 L10.5 0.5 L5.25 6.5 Z" fill="#484848"/></svg><div class="b" style="left:1322px;top:192px;width:2px;height:36px;background:#cfcfcf"></div><span class="t " style="left:1346.70px;top:200.38px;font-size:22px;color:#333;font-weight:400;letter-spacing:-0.109px;">Favorites</span><svg width="11" height="7" style="left:1443.5px;top:207.5px"><path d="M0 0.5 L10.5 0.5 L5.25 6.5 Z" fill="#484848"/></svg><span class="t " style="left:1486.70px;top:200.38px;font-size:22px;color:#333;font-weight:400;letter-spacing:-0.155px;">Download</span><svg width="11" height="7" style="left:1591.5px;top:207.5px"><path d="M0 0.5 L10.5 0.5 L5.25 6.5 Z" fill="#484848"/></svg><span class="t " style="left:1633.00px;top:200.38px;font-size:22px;color:#9a9a9a;font-weight:400;letter-spacing:-0.284px;">Share</span><svg width="11" height="7" style="left:1698px;top:207.5px"><path d="M0 0.5 L10.5 0.5 L5.25 6.5 Z" fill="#8a8a8a"/></svg><div class="b" style="left:2382px;top:184px;width:128px;height:52px;background:linear-gradient(#d3d3d3,#e6e6e6);border:2px solid #a9a9a9;border-radius:3px"></div><svg width="28" height="28" style="left:2388px;top:196px"><rect x="0" y="0" width="28" height="28" fill="#9a9a9a"/><rect x="0" y="0" width="28" height="5" fill="#8b8b8b"/><rect x="1" y="0.5" width="26" height="1.5" fill="#a8a8a8"/><rect x="2.5" y="6" width="23" height="19.5" fill="#e9e9e9"/><rect x="4.5" y="8" width="19" height="15.5" fill="#b3b3b3"/><rect x="6" y="9.3" width="4.2" height="3.4" rx="1" fill="#fff"/><rect x="6" y="14.6" width="4.2" height="2.6" rx="1" fill="#e4e4e4"/><rect x="6" y="19" width="4.2" height="2.4" rx="1" fill="#dcdcdc"/><rect x="12" y="9.3" width="4.2" height="3.4" rx="1" fill="#fff"/><rect x="12" y="14.6" width="4.2" height="2.6" rx="1" fill="#e4e4e4"/><rect x="12" y="19" width="4.2" height="2.4" rx="1" fill="#dcdcdc"/><rect x="18" y="9.3" width="4.2" height="3.4" rx="1" fill="#fff"/><rect x="18" y="14.6" width="4.2" height="2.6" rx="1" fill="#e4e4e4"/><rect x="18" y="19" width="4.2" height="2.4" rx="1" fill="#dcdcdc"/></svg><span class="t " style="left:2428.00px;top:200.38px;font-size:22px;color:#262626;font-weight:400;letter-spacing:-0.119px;">Table</span><svg width="11" height="7" style="left:2488px;top:207.5px"><path d="M0 0.5 L10.5 0.5 L5.25 6.5 Z" fill="#484848"/></svg><svg width="28" height="28" style="left:2522px;top:196px"><rect x="0.3" y="0.3" width="9.3" height="27.4" fill="#8e8e8e"/><rect x="2.4" y="2" width="5" height="24" fill="#adadad"/><rect x="3.9" y="3" width="2" height="22" fill="#9f9f9f"/><rect x="9.8" y="4.6" width="9.4" height="23.1" fill="#919191"/><rect x="12" y="6.5" width="5" height="19.5" fill="#b0b0b0"/><rect x="13.5" y="7.5" width="2" height="17.5" fill="#a2a2a2"/><rect x="19.6" y="12.3" width="8.2" height="15.4" fill="#959595"/><rect x="21.3" y="14" width="4.8" height="12" fill="#b4b4b4"/></svg><span class="t " style="left:2562.50px;top:200.38px;font-size:22px;color:#333;font-weight:400;letter-spacing:0.001px;">Chart</span><svg width="11" height="7" style="left:2624px;top:207.5px"><path d="M0 0.5 L10.5 0.5 L5.25 6.5 Z" fill="#484848"/></svg><div class="b" style="left:2656px;top:192px;width:2px;height:36px;background:#cfcfcf"></div><span class="t " style="left:2680.00px;top:200.38px;font-size:22px;color:#333;font-weight:400;letter-spacing:0.000px;">About</span><svg width="11" height="7" style="left:2746px;top:207.5px"><path d="M0 0.5 L10.5 0.5 L5.25 6.5 Z" fill="#484848"/></svg><span class="t " style="left:2786.50px;top:200.38px;font-size:22px;color:#333;font-weight:400;letter-spacing:-0.047px;">Home</span><div class="b" style="left:896px;top:246px;width:58px;height:58px;background:#c9d6e9"></div><div class="b" style="left:956px;top:246px;width:1476px;height:58px;background:#dae6f8"></div><div class="b" style="left:894px;top:244px;width:1540px;height:2px;background:#b4b4b4"></div><div class="b" style="left:894px;top:304px;width:1540px;height:2px;background:#b4b4b4"></div><div class="b" style="left:894px;top:364px;width:1540px;height:2px;background:#b4b4b4"></div><div class="b" style="left:894px;top:424px;width:1540px;height:2px;background:#b4b4b4"></div><div class="b" style="left:894px;top:484px;width:1540px;height:2px;background:#b4b4b4"></div><div class="b" style="left:894px;top:544px;width:1540px;height:2px;background:#b4b4b4"></div><div class="b" style="left:894px;top:604px;width:1540px;height:2px;background:#b4b4b4"></div><div class="b" style="left:894px;top:664px;width:1540px;height:2px;background:#b4b4b4"></div><div class="b" style="left:894px;top:724px;width:1540px;height:2px;background:#b4b4b4"></div><div class="b" style="left:894px;top:784px;width:1540px;height:2px;background:#b4b4b4"></div><div class="b" style="left:894px;top:844px;width:1540px;height:2px;background:#b4b4b4"></div><div class="b" style="left:894px;top:904px;width:1540px;height:2px;background:#b4b4b4"></div><div class="b" style="left:894px;top:964px;width:1540px;height:2px;background:#b4b4b4"></div><div class="b" style="left:894px;top:1024px;width:1540px;height:2px;background:#b4b4b4"></div><div class="b" style="left:894px;top:1084px;width:1540px;height:2px;background:#b4b4b4"></div><div class="b" style="left:894px;top:1144px;width:1540px;height:2px;background:#b4b4b4"></div><div class="b" style="left:894px;top:1204px;width:1540px;height:2px;background:#b4b4b4"></div><div class="b" style="left:894px;top:1264px;width:1540px;height:2px;background:#b4b4b4"></div><div class="b" style="left:894px;top:1324px;width:1540px;height:2px;background:#b4b4b4"></div><div class="b" style="left:894px;top:1384px;width:1540px;height:2px;background:#b4b4b4"></div><div class="b" style="left:894px;top:1444px;width:1540px;height:2px;background:#b4b4b4"></div><div class="b" style="left:894px;top:1504px;width:1540px;height:2px;background:#b4b4b4"></div><div class="b" style="left:894px;top:244px;width:2px;height:1298px;background:#b4b4b4"></div><div class="b" style="left:954px;top:244px;width:2px;height:1298px;background:#b4b4b4"></div><div class="b" style="left:1126px;top:244px;width:2px;height:1298px;background:#b4b4b4"></div><div class="b" style="left:1442px;top:244px;width:2px;height:1298px;background:#b4b4b4"></div><div class="b" style="left:1656px;top:244px;width:2px;height:1298px;background:#b4b4b4"></div><div class="b" style="left:1950px;top:244px;width:2px;height:1298px;background:#b4b4b4"></div><div class="b" style="left:2106px;top:244px;width:2px;height:1298px;background:#b4b4b4"></div><div class="b" style="left:2298px;top:244px;width:2px;height:1298px;background:#b4b4b4"></div><div class="b" style="left:2432px;top:244px;width:2px;height:1298px;background:#b4b4b4"></div><span class="t " style="left:917.70px;top:261.99px;font-size:26px;color:#000;font-weight:400;letter-spacing:0.631px;">#</span><span class="t " style="left:972.00px;top:261.99px;font-size:26px;color:#000;font-weight:400;letter-spacing:-0.201px;">Event date</span><svg width="11" height="15" style="left:1106px;top:270px"><path d="M5.25 0 L10.5 6 L0 6 Z M0 8.5 L10.5 8.5 L5.25 14.5 Z" fill="#444"/></svg><span class="t " style="left:1142.40px;top:261.99px;font-size:26px;color:#000;font-weight:400;letter-spacing:-0.019px;">Organisation unit name</span><svg width="11" height="15" style="left:1421.5px;top:270px"><path d="M5.25 0 L10.5 6 L0 6 Z M0 8.5 L10.5 8.5 L5.25 14.5 Z" fill="#444"/></svg><span class="t " style="left:1470.00px;top:261.99px;font-size:26px;color:#000;font-weight:400;letter-spacing:-0.069px;">Age in years</span><svg width="11" height="15" style="left:1636px;top:270px"><path d="M5.25 0 L10.5 6 L0 6 Z M0 8.5 L10.5 8.5 L5.25 14.5 Z" fill="#444"/></svg><span class="t " style="left:1705.00px;top:261.99px;font-size:26px;color:#000;font-weight:400;letter-spacing:-0.063px;">Admission Date</span><svg width="11" height="15" style="left:1929.5px;top:270px"><path d="M5.25 0 L10.5 6 L0 6 Z M0 8.5 L10.5 8.5 L5.25 14.5 Z" fill="#444"/></svg><span class="t " style="left:1966.50px;top:261.99px;font-size:26px;color:#000;font-weight:400;letter-spacing:-0.139px;">BMI male</span><svg width="11" height="15" style="left:2085.5px;top:270px"><path d="M5.25 0 L10.5 6 L0 6 Z M0 8.5 L10.5 8.5 L5.25 14.5 Z" fill="#444"/></svg><span class="t " style="left:2123.20px;top:261.99px;font-size:26px;color:#000;font-weight:400;letter-spacing:-0.108px;">Height in cm</span><svg width="11" height="15" style="left:2277.5px;top:270px"><path d="M5.25 0 L10.5 6 L0 6 Z M0 8.5 L10.5 8.5 L5.25 14.5 Z" fill="#444"/></svg><span class="t " style="left:2315.70px;top:261.99px;font-size:26px;color:#000;font-weight:400;letter-spacing:-0.139px;">Gender</span><svg width="11" height="15" style="left:2412px;top:270px"><path d="M5.25 0 L10.5 6 L0 6 Z M0 8.5 L10.5 8.5 L5.25 14.5 Z" fill="#444"/></svg><div class="b" style="left:892px;top:244px;width:1956px;height:1298px;overflow:hidden"><span class="t" style="right:1907.5px;top:78.29px;font-size:26px;color:#000">1</span><span class="t" style="left:78px;top:78.29px;font-size:26px;color:#000">2016-01-01</span><span class="t" style="left:250px;top:78.29px;font-size:26px;color:#000">Ngelehun CHC</span><span class="t" style="left:566px;top:78.29px;font-size:26px;color:#000">LkGDpxZ6UYL</span><span class="t" style="left:780px;top:78.29px;font-size:26px;color:#000">2015-01-01 00:00:00.0</span><span class="t" style="left:1074px;top:78.29px;font-size:26px;color:#000">27.3</span><span class="t" style="left:1230px;top:78.29px;font-size:26px;color:#000">160-180</span><span class="t" style="left:1422px;top:78.29px;font-size:26px;color:#000">Male</span><span class="t" style="right:1907.5px;top:138.29px;font-size:26px;color:#000">2</span><span class="t" style="left:78px;top:138.29px;font-size:26px;color:#000">2016-03-04</span><span class="t" style="left:250px;top:138.29px;font-size:26px;color:#000">Ngelehun CHC</span><span class="t" style="left:566px;top:138.29px;font-size:26px;color:#000">LkGDpxZ6UYL</span><span class="t" style="left:780px;top:138.29px;font-size:26px;color:#000">2015-03-03 00:00:00.0</span><span class="t" style="left:1074px;top:138.29px;font-size:26px;color:#000">52.8</span><span class="t" style="left:1230px;top:138.29px;font-size:26px;color:#000">100-120</span><span class="t" style="left:1422px;top:138.29px;font-size:26px;color:#000">Male</span><span class="t" style="right:1907.5px;top:198.29px;font-size:26px;color:#000">3</span><span class="t" style="left:78px;top:198.29px;font-size:26px;color:#000">2016-03-03</span><span class="t" style="left:250px;top:198.29px;font-size:26px;color:#000">Ngelehun CHC</span><span class="t" style="left:566px;top:198.29px;font-size:26px;color:#000">LkGDpxZ6UYL</span><span class="t" style="left:780px;top:198.29px;font-size:26px;color:#000">2015-03-03 00:00:00.0</span><span class="t" style="left:1074px;top:198.29px;font-size:26px;color:#000">29.7</span><span class="t" style="left:1230px;top:198.29px;font-size:26px;color:#000">160-180</span><span class="t" style="left:1422px;top:198.29px;font-size:26px;color:#000">Male</span><span class="t" style="right:1907.5px;top:258.29px;font-size:26px;color:#000">4</span><span class="t" style="left:78px;top:258.29px;font-size:26px;color:#000">2016-03-02</span><span class="t" style="left:250px;top:258.29px;font-size:26px;color:#000">Ngelehun CHC</span><span class="t" style="left:566px;top:258.29px;font-size:26px;color:#000">LkGDpxZ6UYL</span><span class="t" style="left:780px;top:258.29px;font-size:26px;color:#000">2015-03-03 00:00:00.0</span><span class="t" style="left:1074px;top:258.29px;font-size:26px;color:#000">54</span><span class="t" style="left:1230px;top:258.29px;font-size:26px;color:#000">100-120</span><span class="t" style="left:1422px;top:258.29px;font-size:26px;color:#000">Male</span><span class="t" style="right:1907.5px;top:318.29px;font-size:26px;color:#000">5</span><span class="t" style="left:78px;top:318.29px;font-size:26px;color:#000">2016-02-18</span><span class="t" style="left:250px;top:318.29px;font-size:26px;color:#000">Ngelehun CHC</span><span class="t" style="left:566px;top:318.29px;font-size:26px;color:#000">SvxytKf3PSA</span><span class="t" style="left:780px;top:318.29px;font-size:26px;color:#000">2015-02-04 00:00:00.0</span><span class="t" style="left:1074px;top:318.29px;font-size:26px;color:#000">21.6</span><span class="t" style="left:1230px;top:318.29px;font-size:26px;color:#000">140-160</span><span class="t" style="left:1422px;top:318.29px;font-size:26px;color:#000">Male</span><span class="t" style="right:1907.5px;top:378.29px;font-size:26px;color:#000">6</span><span class="t" style="left:78px;top:378.29px;font-size:26px;color:#000">2016-01-18</span><span class="t" style="left:250px;top:378.29px;font-size:26px;color:#000">Njandama MCHP</span><span class="t" style="left:566px;top:378.29px;font-size:26px;color:#000">TnwTxvRUXAC</span><span class="t" style="left:780px;top:378.29px;font-size:26px;color:#000">2015-01-04 00:00:00.0</span><span class="t" style="left:1074px;top:378.29px;font-size:26px;color:#000">24.3</span><span class="t" style="left:1230px;top:378.29px;font-size:26px;color:#000">120-140</span><span class="t" style="left:1422px;top:378.29px;font-size:26px;color:#000">Male</span><span class="t" style="right:1907.5px;top:438.29px;font-size:26px;color:#000">7</span><span class="t" style="left:78px;top:438.29px;font-size:26px;color:#000">2016-04-28</span><span class="t" style="left:250px;top:438.29px;font-size:26px;color:#000">Ngelehun CHC</span><span class="t" style="left:566px;top:438.29px;font-size:26px;color:#000">bUAtA1f80ou</span><span class="t" style="left:780px;top:438.29px;font-size:26px;color:#000">2015-04-14 00:00:00.0</span><span class="t" style="left:1074px;top:438.29px;font-size:26px;color:#000">33.2</span><span class="t" style="left:1230px;top:438.29px;font-size:26px;color:#000">140-160</span><span class="t" style="left:1422px;top:438.29px;font-size:26px;color:#000">Female</span><span class="t" style="right:1907.5px;top:498.29px;font-size:26px;color:#000">8</span><span class="t" style="left:78px;top:498.29px;font-size:26px;color:#000">2016-02-18</span><span class="t" style="left:250px;top:498.29px;font-size:26px;color:#000">Ngelehun CHC</span><span class="t" style="left:566px;top:498.29px;font-size:26px;color:#000">bUAtA1f80ou</span><span class="t" style="left:780px;top:498.29px;font-size:26px;color:#000">2015-02-04 00:00:00.0</span><span class="t" style="left:1074px;top:498.29px;font-size:26px;color:#000">31.3</span><span class="t" style="left:1230px;top:498.29px;font-size:26px;color:#000">120-140</span><span class="t" style="left:1422px;top:498.29px;font-size:26px;color:#000">Female</span><span class="t" style="right:1907.5px;top:558.29px;font-size:26px;color:#000">9</span><span class="t" style="left:78px;top:558.29px;font-size:26px;color:#000">2016-03-20</span><span class="t" style="left:250px;top:558.29px;font-size:26px;color:#000">Ngelehun CHC</span><span class="t" style="left:566px;top:558.29px;font-size:26px;color:#000">TnwTxvRUXAC</span><span class="t" style="left:780px;top:558.29px;font-size:26px;color:#000">2015-03-06 00:00:00.0</span><span class="t" style="left:1074px;top:558.29px;font-size:26px;color:#000">389.4</span><span class="t" style="left:1230px;top:558.29px;font-size:26px;color:#000">0-100</span><span class="t" style="left:1422px;top:558.29px;font-size:26px;color:#000">Female</span><span class="t" style="right:1907.5px;top:618.29px;font-size:26px;color:#000">10</span><span class="t" style="left:78px;top:618.29px;font-size:26px;color:#000">2016-03-03</span><span class="t" style="left:250px;top:618.29px;font-size:26px;color:#000">Njandama MCHP</span><span class="t" style="left:566px;top:618.29px;font-size:26px;color:#000">gG3RkRHliRL</span><span class="t" style="left:780px;top:618.29px;font-size:26px;color:#000">2015-02-17 00:00:00.0</span><span class="t" style="left:1074px;top:618.29px;font-size:26px;color:#000">13.2</span><span class="t" style="left:1230px;top:618.29px;font-size:26px;color:#000">180-200</span><span class="t" style="left:1422px;top:618.29px;font-size:26px;color:#000">Female</span><span class="t" style="right:1907.5px;top:678.29px;font-size:26px;color:#000">11</span><span class="t" style="left:78px;top:678.29px;font-size:26px;color:#000">2016-01-23</span><span class="t" style="left:250px;top:678.29px;font-size:26px;color:#000">Ngelehun CHC</span><span class="t" style="left:566px;top:678.29px;font-size:26px;color:#000">bUAtA1f80ou</span><span class="t" style="left:780px;top:678.29px;font-size:26px;color:#000">2015-01-09 00:00:00.0</span><span class="t" style="left:1074px;top:678.29px;font-size:26px;color:#000">113.2</span><span class="t" style="left:1230px;top:678.29px;font-size:26px;color:#000">0-100</span><span class="t" style="left:1422px;top:678.29px;font-size:26px;color:#000">Female</span><span class="t" style="right:1907.5px;top:738.29px;font-size:26px;color:#000">12</span><span class="t" style="left:78px;top:738.29px;font-size:26px;color:#000">2016-05-09</span><span class="t" style="left:250px;top:738.29px;font-size:26px;color:#000">Njandama MCHP</span><span class="t" style="left:566px;top:738.29px;font-size:26px;color:#000">gG3RkRHliRL</span><span class="t" style="left:780px;top:738.29px;font-size:26px;color:#000">2015-04-25 00:00:00.0</span><span class="t" style="left:1074px;top:738.29px;font-size:26px;color:#000">18.9</span><span class="t" style="left:1230px;top:738.29px;font-size:26px;color:#000">140-160</span><span class="t" style="left:1422px;top:738.29px;font-size:26px;color:#000">Female</span><span class="t" style="right:1907.5px;top:798.29px;font-size:26px;color:#000">13</span><span class="t" style="left:78px;top:798.29px;font-size:26px;color:#000">2016-03-25</span><span class="t" style="left:250px;top:798.29px;font-size:26px;color:#000">Njandama MCHP</span><span class="t" style="left:566px;top:798.29px;font-size:26px;color:#000">amfim3kFO9C</span><span class="t" style="left:780px;top:798.29px;font-size:26px;color:#000">2015-03-11 00:00:00.0</span><span class="t" style="left:1074px;top:798.29px;font-size:26px;color:#000">74.2</span><span class="t" style="left:1230px;top:798.29px;font-size:26px;color:#000">0-100</span><span class="t" style="left:1422px;top:798.29px;font-size:26px;color:#000">Male</span><span class="t" style="right:1907.5px;top:858.29px;font-size:26px;color:#000">14</span><span class="t" style="left:78px;top:858.29px;font-size:26px;color:#000">2016-01-12</span><span class="t" style="left:250px;top:858.29px;font-size:26px;color:#000">Ngelehun CHC</span><span class="t" style="left:566px;top:858.29px;font-size:26px;color:#000">Za0zFfPm8jy</span><span class="t" style="left:780px;top:858.29px;font-size:26px;color:#000">2014-12-29 00:00:00.0</span><span class="t" style="left:1074px;top:858.29px;font-size:26px;color:#000">79.1</span><span class="t" style="left:1230px;top:858.29px;font-size:26px;color:#000">0-100</span><span class="t" style="left:1422px;top:858.29px;font-size:26px;color:#000">Female</span><span class="t" style="right:1907.5px;top:918.29px;font-size:26px;color:#000">15</span><span class="t" style="left:78px;top:918.29px;font-size:26px;color:#000">2016-05-02</span><span class="t" style="left:250px;top:918.29px;font-size:26px;color:#000">Ngelehun CHC</span><span class="t" style="left:566px;top:918.29px;font-size:26px;color:#000">SvxytKf3PSA</span><span class="t" style="left:780px;top:918.29px;font-size:26px;color:#000">2015-04-18 00:00:00.0</span><span class="t" style="left:1074px;top:918.29px;font-size:26px;color:#000">187.7</span><span class="t" style="left:1230px;top:918.29px;font-size:26px;color:#000">0-100</span><span class="t" style="left:1422px;top:918.29px;font-size:26px;color:#000">Male</span><span class="t" style="right:1907.5px;top:978.29px;font-size:26px;color:#000">16</span><span class="t" style="left:78px;top:978.29px;font-size:26px;color:#000">2016-03-20</span><span class="t" style="left:250px;top:978.29px;font-size:26px;color:#000">Ngelehun CHC</span><span class="t" style="left:566px;top:978.29px;font-size:26px;color:#000">SvxytKf3PSA</span><span class="t" style="left:780px;top:978.29px;font-size:26px;color:#000">2015-03-06 00:00:00.0</span><span class="t" style="left:1074px;top:978.29px;font-size:26px;color:#000">22.3</span><span class="t" style="left:1230px;top:978.29px;font-size:26px;color:#000">140-160</span><span class="t" style="left:1422px;top:978.29px;font-size:26px;color:#000">Female</span><span class="t" style="right:1907.5px;top:1038.29px;font-size:26px;color:#000">17</span><span class="t" style="left:78px;top:1038.29px;font-size:26px;color:#000">2016-01-18</span><span class="t" style="left:250px;top:1038.29px;font-size:26px;color:#000">Ngelehun CHC</span><span class="t" style="left:566px;top:1038.29px;font-size:26px;color:#000">gG3RkRHliRL</span><span class="t" style="left:780px;top:1038.29px;font-size:26px;color:#000">2015-01-04 00:00:00.0</span><span class="t" style="left:1074px;top:1038.29px;font-size:26px;color:#000">13.7</span><span class="t" style="left:1230px;top:1038.29px;font-size:26px;color:#000">180-200</span><span class="t" style="left:1422px;top:1038.29px;font-size:26px;color:#000">Female</span><span class="t" style="right:1907.5px;top:1098.29px;font-size:26px;color:#000">18</span><span class="t" style="left:78px;top:1098.29px;font-size:26px;color:#000">2016-04-20</span><span class="t" style="left:250px;top:1098.29px;font-size:26px;color:#000">Ngelehun CHC</span><span class="t" style="left:566px;top:1098.29px;font-size:26px;color:#000">amfim3kFO9C</span><span class="t" style="left:780px;top:1098.29px;font-size:26px;color:#000">2015-04-06 00:00:00.0</span><span class="t" style="left:1074px;top:1098.29px;font-size:26px;color:#000">9.6</span><span class="t" style="left:1230px;top:1098.29px;font-size:26px;color:#000">120-140</span><span class="t" style="left:1422px;top:1098.29px;font-size:26px;color:#000">Female</span><span class="t" style="right:1907.5px;top:1158.29px;font-size:26px;color:#000">19</span><span class="t" style="left:78px;top:1158.29px;font-size:26px;color:#000">2016-04-02</span><span class="t" style="left:250px;top:1158.29px;font-size:26px;color:#000">Njandama MCHP</span><span class="t" style="left:566px;top:1158.29px;font-size:26px;color:#000">bUAtA1f80ou</span><span class="t" style="left:780px;top:1158.29px;font-size:26px;color:#000">2015-03-19 00:00:00.0</span><span class="t" style="left:1074px;top:1158.29px;font-size:26px;color:#000">78.8</span><span class="t" style="left:1230px;top:1158.29px;font-size:26px;color:#000">0-100</span><span class="t" style="left:1422px;top:1158.29px;font-size:26px;color:#000">Female</span><span class="t" style="right:1907.5px;top:1218.29px;font-size:26px;color:#000">20</span><span class="t" style="left:78px;top:1218.29px;font-size:26px;color:#000">2016-04-02</span><span class="t" style="left:250px;top:1218.29px;font-size:26px;color:#000">Njandama MCHP</span><span class="t" style="left:566px;top:1218.29px;font-size:26px;color:#000">J3z6HCQ5bSJ</span><span class="t" style="left:780px;top:1218.29px;font-size:26px;color:#000">2015-03-19 00:00:00.0</span><span class="t" style="left:1074px;top:1218.29px;font-size:26px;color:#000">44.1</span><span class="t" style="left:1230px;top:1218.29px;font-size:26px;color:#000">0-100</span><span class="t" style="left:1422px;top:1218.29px;font-size:26px;color:#000">Female</span><span class="t" style="right:1907.5px;top:1278.29px;font-size:26px;color:#000">21</span><span class="t" style="left:78px;top:1278.29px;font-size:26px;color:#000">2016-05-11</span><span class="t" style="left:250px;top:1278.29px;font-size:26px;color:#000">Ngelehun CHC</span><span class="t" style="left:566px;top:1278.29px;font-size:26px;color:#000">UBFFXx1miGZ</span><span class="t" style="left:780px;top:1278.29px;font-size:26px;color:#000">2015-04-27 00:00:00.0</span><span class="t" style="left:1074px;top:1278.29px;font-size:26px;color:#000">166.6</span><span class="t" style="left:1230px;top:1278.29px;font-size:26px;color:#000">0-100</span><span class="t" style="left:1422px;top:1278.29px;font-size:26px;color:#000">Male</span></div><div class="b" style="left:2848px;top:244px;width:14px;height:1296px;background:#e2e2e2"></div><div class="b" style="left:2848px;top:244px;width:14px;height:932px;background:#b9b9b9"></div><div class="b" style="left:2434px;top:1522px;width:414px;height:20px;background:linear-gradient(#fff,#f7f7f7)"></div><div class="b" style="left:892px;top:1542px;width:1972px;height:34px;background:#ebebeb;border-top:2px solid #d4d4d4"></div><span class="t " style="left:910.50px;top:1559.52px;font-size:21px;color:#222;font-weight:400;letter-spacing:-0.166px;">&lt;&lt;</span><span class="t " style="left:968.70px;top:1559.52px;font-size:21px;color:#222;font-weight:400;">&lt;</span><span class="t " style="left:1008.70px;top:1559.52px;font-size:21px;color:#222;font-weight:400;letter-spacing:-0.887px;">Page</span><div class="fld" style="left:1068px;top:1550px;width:68px;height:40px"></div><span class="t " style="left:1077.50px;top:1560.37px;font-size:20px;color:#222;font-weight:400;">1</span><span class="t " style="left:1148.00px;top:1559.52px;font-size:21px;color:#222;font-weight:400;letter-spacing:0.242px;">of 1</span><span class="t " style="left:1213.70px;top:1559.52px;font-size:21px;color:#222;font-weight:400;">&gt;</span><span class="t " style="left:1258.70px;top:1559.52px;font-size:21px;color:#222;font-weight:400;letter-spacing:-0.266px;">&gt;&gt;</span><span class="t " style="left:2691.00px;top:1559.52px;font-size:21px;color:#222;font-weight:400;letter-spacing:0.233px;">1-29 of 29 cases</span></div>
</body></html>
